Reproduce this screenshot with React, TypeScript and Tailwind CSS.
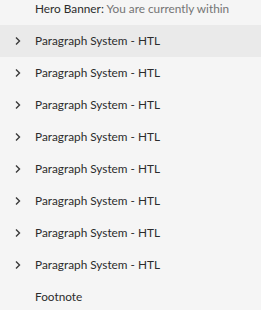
import React from 'react';

const Chevron = () => (
  <svg width="8" height="10" viewBox="0 0 8 10" className="text-[#3a3a3a]">
    <path d="M2 1.5 L5.5 5 L2 8.5" fill="none" stroke="currentColor" strokeWidth="1.4" />
  </svg>
);

const Row: React.FC<{ chevron?: boolean; active?: boolean; children: React.ReactNode }> = ({ chevron, active, children }) => (
  <div className={`flex h-8 items-center ${active ? 'bg-[#eaeaea]' : ''}`}>
    <div className="flex w-[35px] pl-[14px]">{chevron && <Chevron />}</div>
    <div className="whitespace-nowrap text-[11.8px] text-[#2c2c2c]">{children}</div>
  </div>
);

export default function App() {
  return (
    <div className="h-[310px] w-[261px] overflow-hidden bg-[#f5f5f5] font-['Lato',sans-serif]">
      <div className="-mt-[7px]">
        <Row>
          Hero Banner: <span className="text-[#747474]">You are currently within</span>
        </Row>
        {Array.from({ length: 8 }).map((_, i) => (
          <Row key={i} chevron active={i === 0}>
            Paragraph System - HTL
          </Row>
        ))}
        <Row>Footnote</Row>
      </div>
    </div>
  );
}
